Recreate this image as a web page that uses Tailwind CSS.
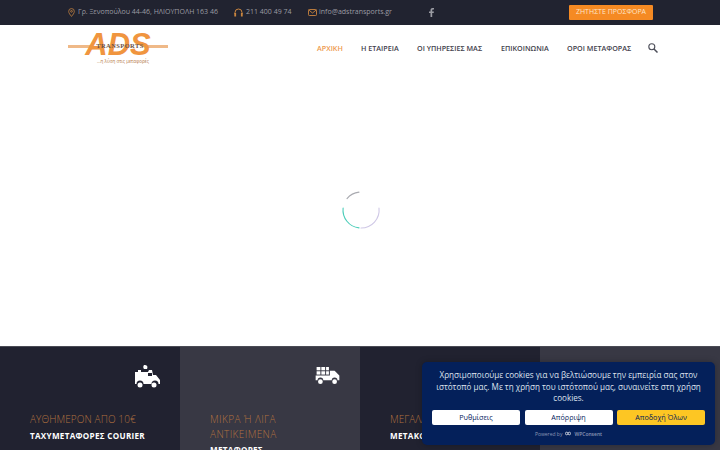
<!DOCTYPE html>
<html lang="el">
<head>
<meta charset="utf-8">
<script src="https://cdn.jsdelivr.net/npm/@tailwindcss/browser@4"></script>
</head>
<body class="w-[720px] h-[450px] overflow-hidden bg-white font-['Open_Sans',sans-serif] relative">
<div class="h-[25px] bg-[#212330] flex items-center text-[7px] text-[#9b9ca3] whitespace-nowrap">
  <div class="ml-[68px] flex items-center gap-[3px] w-[166px]">
    <svg class="w-[7px] h-[9px]" viewBox="0 0 8 10" fill="none" stroke="#b5793f" stroke-width="1"><path d="M4 9.500C2.500 7.500.8 5.800.8 3.700a3.200 3.200 0 0 1 6.400 0C7.200 5.800 5.500 7.500 4 9.500Z"/><circle cx="4" cy="3.700" r="1"/></svg>
    <span>Γρ. Ξενοπούλου 44-46, ΗΛΙΟΥΠΟΛΗ 163 46</span>
  </div>
  <div class="flex items-center gap-[3px] w-[74px]">
    <svg class="w-[9px] h-[9px]" viewBox="0 0 9 9" fill="none"><path d="M1 6V4.500a3.500 3.500 0 0 1 7 0V6" stroke="#c9853f"/><rect x=".3" y="5" width="1.800" height="3.500" fill="#c9853f"/><rect x="6.900" y="5" width="1.800" height="3.500" fill="#c9853f"/></svg>
    <span>211 400 49 74</span>
  </div>
  <div class="flex items-center gap-[2px] w-[121px]">
    <svg class="w-[9px] h-[7px]" viewBox="0 0 9 7" fill="none" stroke="#c9853f" stroke-width=".9"><rect x=".5" y=".5" width="8" height="6" rx=".8"/><path d="m.8 1 3.700 3L8.200 1"/></svg>
    <span>info@adstransports.gr</span>
  </div>
  <svg class="w-[5px] h-[9px]" viewBox="0 0 5 9" fill="#9b9ca3"><path d="M1.500 9V5H0V3.400h1.500V2.200C1.500.8 2.300 0 3.600 0H5v1.600H4c-.6 0-.8.3-.8.8v1h1.700L4.700 5H3.200v4Z"/></svg>
  <div class="ml-[135px] w-[84px] h-[15px] bg-[#f58a23] rounded-[1px] flex items-center justify-center text-[7px] text-[#fde5c9]">ΖΗΤΗΣΤΕ ΠΡΟΣΦΟΡΑ</div>
</div>
<header class="h-[46px] flex items-start relative">
  <div class="ml-[68px] mt-[5px] w-[100px] h-[36px] relative">
    <div class="absolute left-0 top-[15px] w-[24px] h-[3px] bg-[#efb988]"></div>
    <div class="absolute right-0 top-[15px] w-[20px] h-[3px] bg-[#efb988]"></div>
    <div class="absolute left-[17px] top-0 w-[66px] text-center text-[31px] leading-[30px] font-bold italic text-[#f0953f] font-['Liberation_Sans',sans-serif] whitespace-nowrap">ADS</div>
    <div class="absolute left-[26px] top-[12px] w-[52px] text-center text-[6.500px] leading-[8px] font-bold text-[#6b5142] tracking-[.4px] font-['Liberation_Serif',serif]">TRANSPORTS</div>
    <div class="absolute left-[27px] top-[28px] w-[56px] text-center text-[4.500px] leading-[6px] text-[#b4773f] whitespace-nowrap">...η λύση στις μεταφορές</div>
  </div>
  <nav class="absolute left-[317px] top-[18px] flex text-[7.200px] leading-[11px] font-semibold text-[#3f414c] whitespace-nowrap">
    <span class="w-[44px] text-[#ee9a4e]">ΑΡΧΙΚΗ</span>
    <span class="w-[56px]">Η ΕΤΑΙΡΕΙΑ</span>
    <span class="w-[84px]">ΟΙ ΥΠΗΡΕΣΙΕΣ ΜΑΣ</span>
    <span class="w-[66px]">ΕΠΙΚΟΙΝΩΝΙΑ</span>
    <span class="w-[81px]">ΟΡΟΙ ΜΕΤΑΦΟΡΑΣ</span>
    <svg class="w-[10px] h-[10px]" viewBox="0 0 10 10" fill="none" stroke="#4b4d58" stroke-width="1.100"><circle cx="3.800" cy="3.800" r="3"/><path d="m6 6 3.500 3.500" stroke-width="1.500"/></svg>
  </nav>
</header>
<main class="h-[275px] flex justify-center">
  <svg class="mt-[119px] ml-[2px] w-[40px] h-[40px]" viewBox="0 0 40 40" fill="none" stroke-width="1.100" stroke-linecap="round">
    <path d="M18 2.100A18 18 0 0 0 6 8.600" stroke="#a9aab0"/>
    <path d="M2.100 18A18 18 0 0 0 18 37.900" stroke="#4ccdb9"/>
    <path d="M20 38A18 18 0 0 0 38 18" stroke="#cfc8e6"/>
  </svg>
</main>
<section class="h-[104px] grid grid-cols-[180px_180px_180px_180px] border-t border-[#4a4b55] text-white">
  <div class="bg-[#212230] pl-[30px] pr-[20px] pt-[18px]">
    <div class="flex justify-end h-[47px]">
      <svg class="w-[25px] h-[23px]" viewBox="0 0 25 23" fill="#fff"><path d="M0 7h3V5h3v2h7l1-2h3l1 5h3l4 5v4h-1.500a3.500 3.500 0 0 0-7 0H8.500a3.500 3.500 0 0 0-7 0H0Z"/><path d="M9 0c3 0 4 1 3 4H9C8 3 8 1 9 0Z"/><circle cx="5" cy="20" r="2.500"/><circle cx="19" cy="20" r="2.500"/><rect x="13" y="8" width="4" height="3" fill="#212230"/></svg>
    </div>
    <div class="text-[10px] leading-[15px] font-light tracking-[.1px] text-[#b0703f] whitespace-nowrap">ΑΥΘΗΜΕΡΟΝ ΑΠΟ 10€</div>
    <div class="mt-[1px] text-[8.100px] leading-[15px] font-bold tracking-[.3px] whitespace-nowrap">ΤΑΧΥΜΕΤΑΦΟΡΕΣ COURIER</div>
  </div>
  <div class="bg-[#383844] pl-[30px] pr-[20px] pt-[18px]">
    <div class="flex justify-end h-[47px]">
      <svg class="w-[25px] h-[18px] mt-[2px]" viewBox="0 0 25 19" fill="#fff"><rect x="1" y="0" width="4" height="3.500"/><rect x="6" y="0" width="4" height="3.500"/><rect x="11" y="0" width="3" height="3.500"/><rect x="1" y="4.500" width="4" height="3.500"/><rect x="6" y="4.500" width="4" height="3.500"/><rect x="11" y="4.500" width="3" height="3.500"/><path d="M15 4h5l5 5v5h-2a3 3 0 0 0-6 0H8a3 3 0 0 0-6 0H0V9h15Z"/><circle cx="5" cy="15.500" r="2.500"/><circle cx="20" cy="15.500" r="2.500"/></svg>
    </div>
    <div class="text-[10px] leading-[15px] font-light tracking-[.4px] text-[#b0703f]">ΜΙΚΡΑ Ή ΛΙΓΑ<br>ΑΝΤΙΚΕΙΜΕΝΑ</div>
    <div class="text-[8.100px] leading-[15px] font-bold tracking-[.3px]">ΜΕΤΑΦΟΡΕΣ</div>
  </div>
  <div class="bg-[#212230] pl-[30px] pr-[20px] pt-[18px]">
    <div class="h-[47px]"></div>
    <div class="text-[10px] leading-[15px] font-light text-[#b0703f]">ΜΕΓΑΛΑ</div>
    <div class="mt-[1px] text-[8.100px] leading-[15px] font-bold tracking-[.3px]">ΜΕΤΑΚΟΜΙΣΕΙΣ</div>
  </div>
  <div class="bg-[#383844]"></div>
</section>
<aside class="absolute left-[422px] top-[362px] w-[293px] h-[83px] bg-[#04205a] rounded-[5px] px-[10px] pt-[7px] shadow-[0_0_6px_rgba(0,0,0,.25)]">
  <p class="text-[8.100px] leading-[11.500px] text-center text-[#dfe3ee]">Χρησιμοποιούμε cookies για να βελτιώσουμε την εμπειρία σας στον ιστότοπό μας. Με τη χρήση του ιστότοπού μας, συναινείτε στη χρήση cookies.</p>
  <div class="mt-[6px] grid grid-cols-3 gap-[4.500px] text-[7.200px] leading-[15px] text-center text-[#04205a]">
    <div class="bg-white rounded-[2px] h-[15px]">Ρυθμίσεις</div>
    <div class="bg-white rounded-[2px] h-[15px]">Απόρριψη</div>
    <div class="bg-[#fdc623] rounded-[2px] h-[15px]">Αποδοχή Όλων</div>
  </div>
  <div class="mt-[5px] flex justify-center items-center gap-[3px] text-[5px] leading-[8px] text-[#8b97b5]"><span>Powered by</span><svg class="w-[6px] h-[5px]" viewBox="0 0 6 5" fill="none" stroke="#c4cad8"><circle cx="1.700" cy="2.500" r="1.300"/><circle cx="4.300" cy="2.500" r="1.300"/></svg><span class="font-semibold">WPConsent</span></div>
</aside>
</body>
</html>
